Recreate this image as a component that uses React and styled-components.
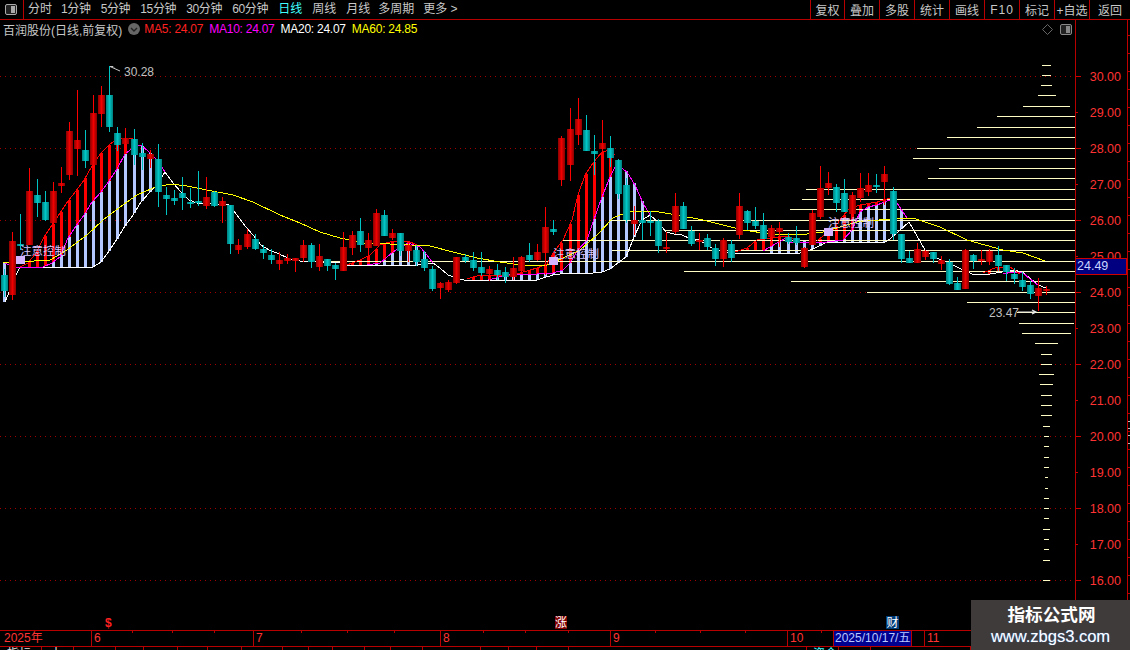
import React from "react";
import styled, { createGlobalStyle } from "styled-components";

const FONT = '"Liberation Sans", "Noto Sans CJK SC", sans-serif';
const LINE = "#b80000";

const Global = createGlobalStyle`
  html, body { margin: 0; padding: 0; background: #000; }
`;
const Page = styled.div`
  position: relative; width: 1130px; height: 650px; overflow: hidden;
  background: #000; font-family: ${FONT}; font-size: 12px; color: #c8c8c8;
  display: flex; flex-direction: column;
`;
const Toolbar = styled.div`
  height: 20px; box-sizing: border-box; flex: none; display: flex; align-items: center;
  border-bottom: 1px solid ${LINE};
`;
const IconCell = styled.div`
  width: 24px; height: 19px; box-sizing: border-box; border-right: 1px solid ${LINE};
  display: flex; align-items: center; justify-content: flex-start; padding-left: 5px;
`;
const Tabs = styled.div`display: flex; gap: 10px; padding-left: 4px; align-items: center;`;
const Tab = styled.span`
  color: ${p => (p.$active ? "#40ffff" : "#c8c8c8")}; white-space: nowrap; line-height: 19px;
  letter-spacing: ${p => (p.$tight ? "-0.35px" : "0")};
  margin-left: ${p => p.$ml || 0}px;
`;
const Buttons = styled.div`margin-left: auto; display: flex; height: 19px;`;
const ToolButton = styled.div`
  width: ${p => p.$w}px; box-sizing: border-box; border-left: 1px solid ${LINE};
  display: flex; align-items: center; justify-content: center; white-space: nowrap; letter-spacing: ${p => p.$ls || 0};
`;
const Body = styled.div`height: 610px; flex: none; display: flex;`;
const Main = styled.div`
  width: 1076px; box-sizing: border-box; border-right: 1px solid ${LINE};
  display: flex; flex-direction: column;
`;
const InfoBar = styled.div`height: 18px; flex: none; display: flex; align-items: center; padding-left: 3px; gap: 6px;`;
const StockName = styled.span`color: #c8c8c8; white-space: nowrap;`;
const MenuDot = styled.svg`flex: none;`;
const Ma = styled.span`color: ${p => p.$c}; white-space: nowrap; letter-spacing: -0.25px; margin-left: ${p => p.$ml || 0}px;`;
const InfoRight = styled.div`margin-left: auto; display: flex; align-items: center; gap: 7px; padding-right: 3px;`;
const Chart = styled.svg`display: block; flex: none;`;
const AxisPane = styled.div`position: relative; flex: 1;`;
const AxisSvg = styled.svg`display: block;`;
const PriceTag = styled.div`
  position: absolute; left: 0; top: 238px; width: 51px; height: 17px; box-sizing: border-box;
  background: #000080; border: 1px solid #d00000; border-left: none;
  color: #c8d4ff; font-size: 12.5px; line-height: 15px; padding-left: 1px;
`;
const TimeAxis = styled.div`
  position: relative; height: 17px; flex: none; box-sizing: border-box; display: flex;
  border-top: 1px solid ${LINE}; border-bottom: 1px solid ${LINE}; color: #ff3333;
`;
const TimeCell = styled.div`
  width: ${p => p.$w}px; flex: none; box-sizing: border-box; padding-left: ${p => p.$pl ?? 2}px;
  border-left: ${p => (p.$noBorder ? "none" : `1px solid ${LINE}`)}; line-height: 15px; white-space: nowrap;
`;
const DateCell = styled(TimeCell)`background: #000090; color: #b8c8ff; padding-left: 1px; border-right: 1px solid ${LINE};`;
const TimeTick = styled.i`position: absolute; top: 0; width: 1px; height: 2px; background: ${LINE}; left: ${p => p.$x}px;`;
const BottomRow = styled.div`flex: 1; display: flex; overflow: hidden;`;
const BottomCell = styled.div`
  width: ${p => p.$w}px; flex: none; box-sizing: border-box; border-right: 1px solid ${LINE};
  padding-left: ${p => p.$pl || 0}px; color: ${p => p.$c || "#e0e0e0"}; line-height: 15px; white-space: nowrap;
`;
const Watermark = styled.div`
  position: absolute; right: 0; bottom: 0; width: 159px; height: 50px; background: #403b3b;
  display: flex; flex-direction: column; align-items: center; padding-top: 3px; box-sizing: border-box;
`;
const MarkTitle = styled.div`color: #fff; font-weight: 700; font-size: 17.6px; line-height: 24px; padding-left: 2px;`;
const MarkUrl = styled.div`color: #fff; font-size: 16.5px; line-height: 19px; text-shadow: 0 0 1px #3f8fe8; white-space: nowrap;`;

const X = n => Math.round(4.3 + 8.075 * n);

// [high, bodyTop, bodyBottom, low, colour] in page pixels
const C = [
[269,275,291,297,"t"],[232,241,295,300,"r"],[214,244,246,250,"t"],[168,191,245,245,"r"],[179,195,203,217,"t"],[191,202,220,221,"t"],[182,191,223,246,"r"],[167,183,186,193,"r"],[122,131,175,180,"r"],[90,140,149,176,"r"],
[130,150,161,168,"t"],[95,113,165,170,"r"],[86,95,114,127,"r"],[66,95,127,132,"t"],[127,133,145,151,"t"],[128,138,144,154,"r"],[129,139,155,165,"t"],[143,153,157,170,"t"],[150,154,159,168,"r"],[144,159,192,207,"t"],
[187,195,199,215,"t"],[190,198,201,205,"t"],[177,193,198,210,"t"],[188,202,204,208,"t"],[171,201,203,206,"t"],[177,197,206,209,"r"],[191,192,206,207,"t"],[197,201,206,223,"r"],[205,205,244,254,"t"],[239,245,250,254,"r"],
[229,234,247,249,"r"],[234,239,249,250,"t"],[245,249,253,259,"t"],[249,255,260,264,"t"],[252,260,264,270,"r"],[254,258,261,264,"r"],[258,258,261,272,"r"],[240,245,258,262,"r"],[243,245,262,268,"t"],[244,256,267,271,"r"],
[259,259,266,271,"t"],[263,265,269,280,"t"],[232,247,271,271,"r"],[231,235,248,255,"r"],[218,231,245,252,"t"],[233,240,248,255,"r"],[209,213,246,246,"r"],[210,215,236,236,"t"],[229,233,238,240,"r"],[233,233,251,256,"t"],
[241,245,251,262,"r"],[245,250,262,266,"t"],[251,259,268,271,"t"],[266,269,289,291,"t"],[282,283,288,299,"r"],[280,282,290,292,"r"],[257,257,283,284,"r"],[254,257,261,263,"t"],[252,260,268,271,"t"],[252,267,273,276,"t"],
[266,269,274,281,"r"],[264,270,275,280,"t"],[267,272,277,283,"t"],[257,268,277,280,"r"],[256,257,271,272,"r"],[243,255,260,262,"t"],[244,252,260,261,"r"],[207,227,253,275,"r"],[220,229,232,235,"t"],[136,138,180,186,"r"],
[108,129,165,181,"r"],[98,119,135,145,"r"],[115,130,151,151,"t"],[135,151,154,175,"t"],[120,143,149,169,"r"],[136,148,158,167,"t"],[159,160,194,199,"t"],[178,185,220,223,"t"],[206,220,224,235,"r"],[211,220,223,240,"t"],
[211,221,223,236,"t"],[219,221,246,253,"t"],[232,247,248,253,"r"],[193,206,232,234,"r"],[202,206,229,229,"t"],[226,231,244,246,"t"],[233,240,242,250,"r"],[234,238,247,250,"t"],[244,248,259,266,"t"],[238,240,259,267,"r"],
[240,244,258,262,"t"],[193,206,235,239,"r"],[210,211,223,230,"t"],[207,221,226,229,"t"],[213,225,239,239,"t"],[225,228,237,246,"r"],[222,228,232,247,"r"],[233,237,242,244,"t"],[226,238,243,245,"t"],[247,248,267,268,"r"],
[210,213,245,245,"r"],[166,188,217,219,"r"],[172,183,188,195,"r"],[184,187,203,212,"t"],[179,193,212,212,"t"],[192,195,214,214,"r"],[173,188,198,202,"r"],[173,185,192,196,"r"],[174,185,186,193,"t"],[166,174,182,205,"r"],
[187,191,234,240,"t"],[234,234,259,263,"t"],[251,258,263,263,"t"],[243,249,263,263,"r"],[250,251,257,260,"r"],[252,252,259,263,"t"],[256,260,264,270,"r"],[259,262,284,285,"t"],[277,283,290,290,"t"],[249,250,289,289,"r"],
[254,255,261,269,"t"],[250,259,261,265,"r"],[249,251,262,265,"r"],[246,255,266,271,"t"],[265,265,272,281,"t"],[268,274,279,284,"t"],[272,280,287,291,"t"],[281,285,294,299,"t"],[278,288,296,311,"r"],[286,289,291,295,"r"],
];

const WHITE = [[5,302],[10,290],[17,273],[20,267],[93,267],[101,262],[109,251],[117,239],[125,226],[133,215],[141,202],[149,193],[157,185],[165,172],[173,183],[181,192],[189,200],[197,203],[229,205],[237,215],[245,226],[253,235],[261,245],[269,250],[277,253],[290,259],[300,261],[340,263],[347,265],[418,265],[427,263],[433,263],[440,268],[448,275],[456,278],[464,280],[537,280],[543,278],[553,275],[560,274],[593,273],[602,272],[610,269],[618,263],[626,257],[634,237],[642,220],[650,215],[658,222],[666,232],[674,234],[682,235],[691,239],[699,240],[707,245],[715,250],[731,253],[800,253],[808,251],[817,247],[827,242],[885,242],[890,239],[909,222],[925,250],[933,256],[941,260],[949,263],[963,270],[972,274],[990,274],[1014,270],[1022,272],[1030,278],[1038,285],[1046,288]];
const YELLOW = [[3,263],[50,260],[67,250],[87,235],[103,220],[120,207],[137,195],[153,188],[170,184],[187,186],[207,190],[233,195],[253,202],[280,215],[300,223],[320,232],[340,238],[363,243],[390,244],[430,246],[453,252],[477,258],[500,262],[527,266],[547,265],[563,258],[580,250],[597,235],[613,218],[630,211],[653,211],[677,215],[703,220],[723,225],[743,230],[770,234],[807,234],[823,232],[857,222],[890,219],[913,218],[940,227],[967,240],[1003,250],[1023,253],[1045,261]];

// each stretch of the indicator band: top (red) line, middle (magenta) line, bar ranges
const BANDS = [
  { red: [[20,267],[28,263],[36,253],[44,237],[52,225],[60,213],[68,201],[76,191],[84,180],[92,166],[101,153],[109,145],[117,139],[125,138],[133,139]],
    mag: [[5,263],[13,267],[43,267],[52,263],[60,257],[68,238],[76,226],[84,215],[92,202],[101,192],[109,181],[117,169],[125,154],[133,148],[141,145],[149,152],[157,160],[165,172]],
    r: [3,15], b: [6,18] },
  { red: [[347,265],[360,260],[370,255],[380,245],[393,241],[408,241],[417,245]],
    mag: [[367,265],[380,263],[393,252],[408,243],[420,247],[427,255],[433,263]],
    r: [43,50], b: [46,52] },
  { red: [[467,279],[480,275],[513,275],[537,268],[547,264],[553,253],[563,240],[572,220],[578,195],[585,175],[593,163],[602,152],[610,150],[615,155]],
    mag: [[488,280],[507,275],[537,274],[553,273],[563,270],[570,263],[578,250],[587,240],[593,222],[602,197],[610,177],[615,167],[620,167],[627,172],[635,185],[643,203],[650,215]],
    r: [58,75], b: [61,79] },
  { red: [[735,252],[747,248],[757,240],[770,238],[787,236],[797,240]],
    mag: [[763,251],[777,243],[788,237],[800,240]],
    r: [91,96], b: [95,99] },
  { red: [[817,241],[823,236],[833,230],[842,217],[850,208],[860,205],[877,202],[890,198],[897,203]],
    mag: [[790,242],[827,242],[843,240],[852,230],[860,212],[868,207],[877,205],[890,200],[897,203],[907,218]],
    r: [101,109], b: [100,111] },
  { red: [[983,273],[997,267],[1010,267],[1020,274]],
    mag: [[1003,274],[1012,272],[1023,273],[1030,279],[1038,285]],
    r: [122,123], b: [125,126] },
];

const PROFILE = [
[65,1042,1051],[75,1042,1051],[85,1041,1052],[95,1038,1056],[106,1023,1070],[116,997,1075],[127,977,1075],[137,947,1075],[148,917,1075],[158,913,1075],[168,939,1075],[178,928,1075],[189,806,1075],[199,802,1075],[209,790,1075],[220,609,1075],[230,664,1075],[240,563,1075],[250,612,1075],[261,303,1075],[271,684,1075],[281,791,1075],[292,867,1075],[302,967,1075],[312,1017,1075],[323,1019,1074],[333,1022,1071],[343,1035,1058],[354,1041,1052],[364,1041,1052],[374,1039,1054],[384,1040,1053],[395,1041,1052],[405,1041,1052],[415,1041,1052],[426,1043,1050],[436,1044,1049],[446,1044,1049],[457,1044,1049],[467,1044,1049],[477,1045,1048],[488,1045,1048],[498,1044,1049],[508,1044,1049],[518,1044,1049],[529,1043,1050],[539,1044,1049],[549,1044,1049],[560,1043,1050],[580,1043,1050],
];

const PY = p => 76.5 + (30 - p) * 36;
const pts = a => a.map(p => p.join(",")).join(" ");
const interp = (line, x) => {
  if (x <= line[0][0]) return line[0][1];
  for (let i = 1; i < line.length; i++) {
    if (x <= line[i][0]) {
      const [a, b] = [line[i - 1], line[i]];
      return a[1] + ((x - a[0]) / (b[0] - a[0])) * (b[1] - a[1]);
    }
  }
  return line[line.length - 1][1];
};
const range = ([a, b]) => Array.from({ length: b - a + 1 }, (_, i) => a + i);

const Bars = () => (
  <g shapeRendering="crispEdges">
    <rect x={3} y={262} width={3} height={40} fill="#b4c8ff" />
    {BANDS.map((b, i) => (
      <g key={i}>
        {range(b.b).map(n => {
          const x = X(n); const top = interp(b.mag, x); const bot = interp(WHITE, x);
          return bot > top ? <rect key={n} x={x - 1} y={top} width={3} height={bot - top} fill="#b4c8ff" /> : null;
        })}
        {range(b.r).map(n => {
          const x = X(n); const top = interp(b.red, x); const bot = Math.min(interp(b.mag, x), interp(WHITE, x));
          return bot > top ? <rect key={n} x={x - 1} y={top} width={3} height={bot - top} fill="#ff0000" /> : null;
        })}
      </g>
    ))}
  </g>
);

const Candles = () => (
  <g shapeRendering="crispEdges">
    {C.map(([h, t, b, l, c], n) => {
      const x = X(n);
      return (
        <g key={n}>
          <rect x={x} y={h} width={1} height={l - h} fill={c === "r" ? "#ff0000" : "#00c4c4"} />
          <rect x={x - 3} y={t} width={7} height={Math.max(b - t, 2)} fill={`url(#${c}g)`} />
        </g>
      );
    })}
  </g>
);

const NOTES = [[20, 255, 16, 256], [553, 258, 549, 257], [828, 227, 824, 228]];

const TICKS = [132, 172, 214, 301, 347, 394, 483, 525, 568, 655, 700, 745, 821];
const BOTTOM = [42, 32, 42, 28, 34, 30, 34, 41, 26, 24, 32, 26, 32, 58, 28, 28, 32, 238, 32, 32, 100];

export default function App() {
  return (
    <Page>
      <Global />
      <Toolbar>
        <IconCell>
          <svg width="12" height="11" viewBox="0 0 12 11">
            <rect x="0.5" y="0.5" width="11" height="10" rx="1.5" fill="#222" stroke="#aaa" />
            <rect x="6" y="2" width="4" height="7" fill="#aaa" />
          </svg>
        </IconCell>
        <Tabs>
          <Tab>分时</Tab>
          {["1分钟", "5分钟", "15分钟", "30分钟", "60分钟"].map((t, i) => <Tab key={t} $tight $ml={i === 0 ? -1 : 0}>{t}</Tab>)}
          <Tab $active>日线</Tab>
          <Tab>周线</Tab>
          <Tab>月线</Tab>
          <Tab $ml={-2}>多周期</Tab>
          <Tab $ml={-1}>更多 &gt;</Tab>
        </Tabs>
        <Buttons>
          <ToolButton $w={34}>复权</ToolButton>
          <ToolButton $w={35}>叠加</ToolButton>
          <ToolButton $w={35}>多股</ToolButton>
          <ToolButton $w={35}>统计</ToolButton>
          <ToolButton $w={35}>画线</ToolButton>
          <ToolButton $w={35} $ls="1px">F10</ToolButton>
          <ToolButton $w={35}>标记</ToolButton>
          <ToolButton $w={35}>+自选</ToolButton>
          <ToolButton $w={41}>返回</ToolButton>
        </Buttons>
      </Toolbar>
      <Body>
        <Main>
          <InfoBar>
            <StockName>百润股份(日线,前复权)</StockName>
            <MenuDot width="12" height="12" viewBox="0 0 12 12">
              <circle cx="6" cy="6" r="6" fill="#666" />
              <path d="M3 5l3 3 3-3" fill="none" stroke="#222" strokeWidth="1.4" />
            </MenuDot>
            <Ma $c="#ff2020" $ml={-2}>MA5: 24.07</Ma>
            <Ma $c="#ff00ff">MA10: 24.07</Ma>
            <Ma $c="#ffffff">MA20: 24.07</Ma>
            <Ma $c="#ffff00">MA60: 24.85</Ma>
            <InfoRight>
              <svg width="11" height="11" viewBox="0 0 11 11">
                <path d="M5.5 0.5L10.5 5.5 5.5 10.5 0.5 5.5Z" fill="none" stroke="#666" />
              </svg>
              <svg width="12" height="11" viewBox="0 0 12 11">
                <rect x="0.5" y="0.5" width="11" height="10" rx="1.5" fill="#222" stroke="#888" />
                <rect x="6" y="2" width="4" height="7" fill="#888" />
              </svg>
            </InfoRight>
          </InfoBar>
          <Chart width="1075" height="592" viewBox="0 38 1075 592" fontFamily={FONT}>
            <defs>
              <linearGradient id="rg" x1="0" x2="1" y1="0" y2="0">
                <stop offset="0" stopColor="#8a0000" />
                <stop offset="0.5" stopColor="#f00000" />
                <stop offset="1" stopColor="#8a0000" />
              </linearGradient>
              <linearGradient id="tg" x1="0" x2="1" y1="0" y2="0">
                <stop offset="0" stopColor="#007c7c" />
                <stop offset="0.5" stopColor="#00c8c8" />
                <stop offset="1" stopColor="#007c7c" />
              </linearGradient>
            </defs>
            <g shapeRendering="crispEdges">
              {[30, 28, 26, 24, 22, 20, 18, 16].map(p => (
                <line key={p} x1="0" x2="1075" y1={Math.floor(PY(p)) + 0.5} y2={Math.floor(PY(p)) + 0.5} stroke="#a00000" strokeDasharray="1 4" />
              ))}
            </g>
            <Bars />
            <g shapeRendering="crispEdges">
              {PROFILE.map(([y, a, b]) => <rect key={y} x={a} y={y} width={b - a} height={1} fill="#fffdc4" />)}
            </g>
            <g fill="none" shapeRendering="crispEdges">
              <polyline points={pts(WHITE)} stroke="#ffffff" />
              {BANDS.map((b, i) => <polyline key={i} points={pts(b.mag)} stroke="#ff00ff" />)}
              {BANDS.map((b, i) => <polyline key={i} points={pts(b.red)} stroke="#ff0000" />)}
              <polyline points={pts(YELLOW)} stroke="#ffff00" />
            </g>
            {NOTES.map(([tx, ty, bx, by]) => (
              <rect key={tx} x={bx} y={by} width={9} height={8} fill="#d4b4ff" shapeRendering="crispEdges" />
            ))}
            <Candles />
            {NOTES.map(([tx, ty]) => (
              <text key={tx} x={tx} y={ty} fontSize="11.5" fill="#d8c4ff">注意控制</text>
            ))}
            <path d="M110 66.5h3M110 66.5l10 4.5M113 66.5l1 1" fill="none" stroke="#c8c8c8" />
            <text x="124" y="76" fontSize="12" fill="#c0c0c0">30.28</text>
            <text x="989" y="317" fontSize="12" fill="#c0c0c0">23.47</text>
            <path d="M1018 312h18M1032 310l4 2-4 2" fill="none" stroke="#e8e8e8" strokeWidth="1.2" />
            <text x="105" y="627" fontSize="12" fontWeight="700" fill="#ff2020">$</text>
            <rect x="555" y="616" width="12" height="13" fill="#800000" />
            <text x="555" y="627" fontSize="12" fill="#ffffff">涨</text>
            <rect x="886" y="616" width="13" height="13" fill="#003c78" />
            <text x="886.5" y="627" fontSize="12" fill="#ffffff">财</text>
          </Chart>
        </Main>
        <AxisPane>
          <AxisSvg width="54" height="610" viewBox="1076 20 54 610" fontFamily={FONT}>
            <g shapeRendering="crispEdges">
              {Array.from({ length: 15 }, (_, i) => 16 + i).map(p => (
                <rect key={p} x="1076" y={Math.floor(PY(p))} width={p % 2 ? 2 : 5} height="1" fill="#d00000" />
              ))}
              <rect x="1127" y="20" width="1" height="610" fill="#c00000" />
              {Array.from({ length: 34 }, (_, i) => 35 + i * 18).map(y => (
                <rect key={y} x="1128" y={y} width="2" height="1" fill="#c00000" />
              ))}
              {[421, 428, 435, 443].map(y => <rect key={y} x="1128" y={y} width="2" height="1" fill="#bbb" />)}
            </g>
            {Array.from({ length: 15 }, (_, i) => 16 + i).map(p => (
              <text key={p} x="1121" y={PY(p) + 4.5} textAnchor="end" fontSize="12.5" fill="#ff3333">{p}.00</text>
            ))}
          </AxisSvg>
          <PriceTag>24.49</PriceTag>
        </AxisPane>
      </Body>
      <TimeAxis>
        <TimeCell $w={91} $noBorder $pl={4}>2025年</TimeCell>
        <TimeCell $w={162}>6</TimeCell>
        <TimeCell $w={187}>7</TimeCell>
        <TimeCell $w={170}>8</TimeCell>
        <TimeCell $w={177}>9</TimeCell>
        <TimeCell $w={46}>10</TimeCell>
        <DateCell $w={79}>2025/10/17/五</DateCell>
        <TimeCell $w={12} $noBorder />
        <TimeCell $w={60}>11</TimeCell>
        {TICKS.map(x => <TimeTick key={x} $x={x} />)}
      </TimeAxis>
      <BottomRow>
        {BOTTOM.map((w, i) => (
          <BottomCell key={i} $w={w} $pl={i === 0 ? 7 : i === 1 ? 8 : i === 18 ? 6 : 0} $c={i === 18 ? "#40ffff" : undefined}>
            {i === 0 ? "指标" : i === 1 ? "十" : i === 18 ? "资金" : ""}
          </BottomCell>
        ))}
      </BottomRow>
      <Watermark>
        <MarkTitle>指标公式网</MarkTitle>
        <MarkUrl>www.zbgs3.com</MarkUrl>
      </Watermark>
    </Page>
  );
}
